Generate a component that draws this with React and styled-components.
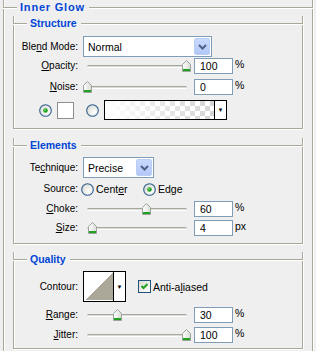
import React from "react"
import styled, { createGlobalStyle } from "styled-components"

const GlobalStyle = createGlobalStyle`
  html, body {
    margin: 0;
    padding: 0;
    background: #efefef;
    overflow: hidden;
  }
  body {
    font-family: "Liberation Sans", Arial, sans-serif;
    font-size: 10px;
    color: #000;
  }
`

export default function App() {
  return (
    <Page>
      <GlobalStyle />
      <Group $outer>
        <Header><Title $wide>Inner Glow</Title></Header>

        <Group $top={9} $pb={8}>
          <Header><Title>Structure</Title></Header>
          <Row $mt={6} $h={21}>
            <Label>Ble<u>n</u>d Mode:</Label>
            <Select $w={129}>
              <span>Normal</span>
              <DropButton><Chevron /></DropButton>
            </Select>
          </Row>
          <SliderRow mt={1} label={<><u>O</u>pacity:</>} pos={100} value="100" unit="%" />
          <SliderRow mt={5} label={<><u>N</u>oise:</>} pos={0} value="0" unit="%" />
          <Row $mt={5} $h={20}>
            <ColorPick>
              <Radio checked />
              <Swatch />
              <Radio />
              <GradientPick>
                <GradientFill />
                <ArrowPart>▼</ArrowPart>
              </GradientPick>
            </ColorPick>
          </Row>
        </Group>

        <Group $top={16} $pb={7}>
          <Header><Title>Elements</Title></Header>
          <Row $mt={5} $h={21}>
            <Label>Te<u>c</u>hnique:</Label>
            <Select $w={71}>
              <span>Precise</span>
              <DropButton><Chevron /></DropButton>
            </Select>
          </Row>
          <Row $mt={3} $h={16}>
            <Label>Source:</Label>
            <Options>
              <Option $w={62}><Radio /><span>Cent<u>e</u>r</span></Option>
              <Option><Radio checked /><span>Ed<u>g</u>e</span></Option>
            </Options>
          </Row>
          <SliderRow mt={4} label={<><u>C</u>hoke:</>} pos={60} value="60" unit="%" />
          <SliderRow mt={3} label={<><u>S</u>ize:</>} pos={5} value="4" unit="px" />
        </Group>

        <Group $top={15} $pb={5}>
          <Header><Title>Quality</Title></Header>
          <Row $mt={5} $h={31}>
            <Label>Contour:</Label>
            <ContourPick>
              <ContourPreview />
              <ArrowPart>▼</ArrowPart>
            </ContourPick>
            <CheckLabel><Check /><span>Anti-a<u>l</u>iased</span></CheckLabel>
          </Row>
          <SliderRow mt={5} label={<><u>R</u>ange:</>} pos={30} value="30" unit="%" />
          <SliderRow mt={4} label={<><u>J</u>itter:</>} pos={100} value="100" unit="%" />
        </Group>
      </Group>
    </Page>
  )
}

function SliderRow({ mt, label, pos, value, unit }) {
  return (
    <Row $mt={mt} $h={16}>
      <Label>{label}</Label>
      <Slider>
        <Track />
        <Thumb style={{ left: `${(pos / 100) * 99}px` }} />
      </Slider>
      <NumBox>{value}</NumBox>
      <Unit>{unit}</Unit>
    </Row>
  )
}

function Thumb({ style }) {
  return (
    <ThumbWrap style={style}>
      <svg width="9" height="12" viewBox="0 0 9 12">
        <defs>
          <linearGradient id="tg" x1="0" y1="0" x2="1" y2="0">
            <stop offset="0" stopColor="#ffffff" />
            <stop offset="1" stopColor="#d8dcd6" />
          </linearGradient>
        </defs>
        <path d="M0.5 4.5 L4.5 0.5 L8.5 4.5 V11.5 H0.5 Z" fill="url(#tg)" stroke="#9aa49a" />
        <rect x="1" y="9" width="7" height="2" fill="#21a121" />
      </svg>
    </ThumbWrap>
  )
}

function Radio({ checked }) {
  return (
    <RadioBox>
      <svg width="13" height="13" viewBox="0 0 13 13">
        <defs>
          <radialGradient id="rg" cx="0.65" cy="0.65" r="0.7">
            <stop offset="0" stopColor="#ffffff" />
            <stop offset="1" stopColor="#dcdcd4" />
          </radialGradient>
        </defs>
        <circle cx="6.5" cy="6.5" r="5.8" fill="url(#rg)" stroke="#2f5f8f" strokeWidth="1.1" />
        {checked && <circle cx="6.5" cy="6.5" r="2.3" fill="#21a121" />}
        {checked && <circle cx="6" cy="6" r="0.9" fill="#6fd86f" />}
      </svg>
    </RadioBox>
  )
}

function Check() {
  return (
    <CheckBox>
      <svg width="11" height="11" viewBox="0 0 11 11">
        <path d="M2.5 5 L4.5 7 L8.5 3" fill="none" stroke="#21a121" strokeWidth="2" />
      </svg>
    </CheckBox>
  )
}

function Chevron() {
  return (
    <svg width="9" height="6" viewBox="0 0 9 6">
      <path d="M1 1 L4.5 4.5 L8 1" fill="none" stroke="#4d6185" strokeWidth="2" />
    </svg>
  )
}

const Page = styled.div`
  width: 316px;
  height: 351px;
  box-sizing: border-box;
  padding: 7px 0 0 3px;
  overflow: hidden;
`

const Group = styled.div`
  box-sizing: border-box;
  border: 1px solid #aca899;
  border-top: none;
  box-shadow: 1px 1px 0 #fff, inset 1px 0 0 #fff;
  width: ${p => (p.$outer ? 310 : 290)}px;
  margin: ${p => (p.$outer ? "0" : `${p.$top}px 0 0 9px`)};
  padding-bottom: ${p => p.$pb || 0}px;
  height: ${p => (p.$outer ? "420px" : "auto")};
`

const Header = styled.div`
  display: flex;
  height: 14px;
  margin: -7px -1px 0 -1px;

  &::before,
  &::after {
    content: "";
    align-self: flex-start;
    margin-top: 7px;
    height: 0;
    border-top: 1px solid #aca899;
    box-shadow: 0 1px 0 #fff;
  }
  &::before {
    width: 14px;
  }
  &::after {
    flex: 1;
  }
`

const Title = styled.span`
  padding: 0 4px 0 3px;
  font-weight: bold;
  font-size: ${p => (p.$wide ? "11px" : "10.5px")};
  letter-spacing: ${p => (p.$wide ? "0.8px" : "0")};
  line-height: 14px;
  color: #0046d5;
  white-space: nowrap;
`

const Row = styled.div`
  display: flex;
  align-items: center;
  height: ${p => p.$h}px;
  margin-top: ${p => p.$mt}px;
  white-space: nowrap;
`

const Label = styled.div`
  width: 64px;
  flex: none;
  text-align: right;
  margin-right: 5px;
  line-height: 12px;

  u {
    text-underline-offset: 1px;
  }
`

const Select = styled.div`
  box-sizing: border-box;
  width: ${p => p.$w}px;
  height: 21px;
  border: 1px solid #7f9db9;
  background: #fff;
  display: flex;
  align-items: center;
  justify-content: space-between;
  padding: 1px;
  font-size: 10.5px;

  & > span {
    padding-left: 3px;
  }
`

const DropButton = styled.div`
  box-sizing: border-box;
  width: 16px;
  height: 17px;
  border: 1px solid #bacdf6;
  border-radius: 2px;
  background: linear-gradient(#c9d9fc, #b3c8f7);
  display: flex;
  align-items: center;
  justify-content: center;
`

const Slider = styled.div`
  position: relative;
  width: 108px;
  height: 16px;
  display: flex;
  align-items: center;
  padding: 0 4px;
  box-sizing: border-box;
  flex: none;
`

const Track = styled.div`
  flex: 1;
  height: 1px;
  margin-top: 1px;
  background: #dcdcd6;
  border-top: 1px solid #a8a8a0;
  border-bottom: 1px solid #fff;
  border-radius: 2px;
`

const ThumbWrap = styled.div`
  position: absolute;
  top: 2px;
  width: 9px;
  height: 12px;
  line-height: 0;
`

const NumBox = styled.div`
  box-sizing: border-box;
  width: 39px;
  height: 16px;
  margin-left: 3px;
  border: 1px solid #7f9db9;
  background: #fff;
  padding-left: 5px;
  line-height: 14px;
  font-size: 10.5px;
`

const Unit = styled.span`
  margin-left: 2px;
  margin-top: -4px;
  font-size: 10.5px;
`

const ColorPick = styled.div`
  display: flex;
  align-items: center;
  padding-left: 25px;
`

const RadioBox = styled.span`
  display: inline-flex;
  width: 13px;
  height: 13px;
  flex: none;
`

const Swatch = styled.div`
  box-sizing: border-box;
  width: 17px;
  height: 17px;
  margin: 0 12px 0 5px;
  border: 1px solid #8e8e8e;
  background: #fff;
`

const GradientPick = styled.div`
  box-sizing: border-box;
  display: flex;
  width: 123px;
  height: 20px;
  margin-left: 5px;
  border: 1px solid #000;
`

const GradientFill = styled.div`
  flex: 1;
  background:
    linear-gradient(to right, #fff 0%, rgba(255, 255, 255, 0) 100%),
    repeating-conic-gradient(#d4d4d4 0 25%, #fff 0 50%) 0 0 / 10px 10px;
`

const ArrowPart = styled.div`
  width: 11px;
  border-left: 1px solid #000;
  background: #fff;
  display: flex;
  align-items: center;
  justify-content: center;
  font-size: 6px;
  line-height: 1;
`

const Options = styled.div`
  display: flex;
  align-items: center;
  margin-left: -2px;
`

const Option = styled.label`
  display: flex;
  align-items: center;
  gap: 2px;
  width: ${p => (p.$w ? `${p.$w}px` : "auto")};
  font-size: 10.5px;
`

const ContourPick = styled.div`
  box-sizing: border-box;
  display: flex;
  width: 43px;
  height: 31px;
  border: 1px solid #000;
`

const ContourPreview = styled.div`
  flex: 1;
  border: 1px solid #fff;
  border-right: none;
  background: linear-gradient(to bottom right, #fff 50%, #aca899 50%);
`

const CheckLabel = styled.label`
  display: flex;
  align-items: center;
  gap: 2px;
  margin-left: 12px;
  font-size: 10.5px;
`

const CheckBox = styled.span`
  box-sizing: border-box;
  width: 13px;
  height: 13px;
  border: 1px solid #1c5180;
  background: linear-gradient(135deg, #dcdcd4, #fff);
  display: inline-flex;
  align-items: center;
  justify-content: center;
`
